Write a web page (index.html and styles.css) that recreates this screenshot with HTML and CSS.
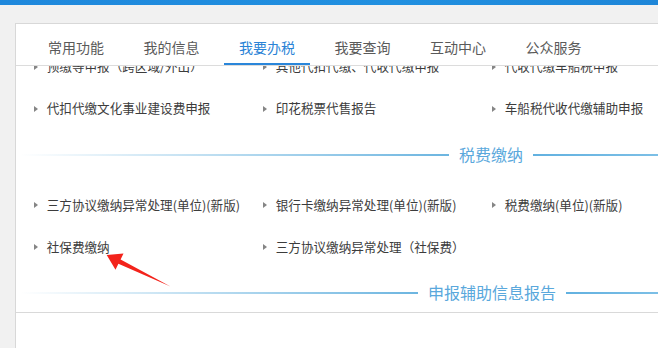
FILE: index.html
```html
<!DOCTYPE html>
<html lang="zh-CN">
<head>
<meta charset="utf-8">
<title>我要办税</title>
<link rel="stylesheet" href="styles.css">
</head>
<body>
<div class="topbar"></div>
<div class="card">
  <nav class="tabs">
    <a class="tab">常用功能</a>
    <a class="tab">我的信息</a>
    <a class="tab active">我要办税</a>
    <a class="tab">我要查询</a>
    <a class="tab">互动中心</a>
    <a class="tab">公众服务</a>
  </nav>
  <div class="pane">
    <div class="pane-inner">
      <ul class="grid">
        <li class="item">预缴等申报（跨区域/外出）</li>
        <li class="item">其他代扣代缴、代收代缴申报</li>
        <li class="item">代收代缴车船税申报</li>
        <li class="item">代扣代缴文化事业建设费申报</li>
        <li class="item">印花税票代售报告</li>
        <li class="item">车船税代收代缴辅助申报</li>
      </ul>
      <div class="sec"><span class="line l l-pay"></span><span class="sec-title">税费缴纳</span><span class="line r"></span></div>
      <ul class="grid">
        <li class="item">三方协议缴纳异常处理(单位)(新版)</li>
        <li class="item">银行卡缴纳异常处理(单位)(新版)</li>
        <li class="item">税费缴纳(单位)(新版)</li>
        <li class="item">社保费缴纳</li>
        <li class="item">三方协议缴纳异常处理（社保费）</li>
      </ul>
      <div class="sec"><span class="line l l-aux"></span><span class="sec-title">申报辅助信息报告</span><span class="line r"></span></div>
    </div>
  </div>
</div>
<svg class="arrow" width="76" height="44" viewBox="0 0 76 44">
  <polygon points="6.7,7 23.5,5.5 20.6,11.4 70.5,38.5 18.4,15.8 15.5,21.7" fill="#f3231b"/>
</svg>
</body>
</html>
```
FILE: styles.css
```css
html, body {
  margin: 0;
  height: 100%;
}
body {
  background: #f1f1f1;
  overflow: hidden;
  position: relative;
  font-family: "Noto Sans CJK SC", "Noto Sans", sans-serif;
}
.topbar {
  height: 5px;
  background: linear-gradient(to right, #1f88dc, #2190e0 60%, #1e86d8);
}
.card {
  margin: 18px 0 0 15px;
  height: calc(100vh - 24px);
  background: #fff;
  border: 1px solid #d8d8d8;
  border-right: none;
  border-bottom: none;
}
.tabs {
  display: flex;
  gap: 9.5px;
  padding-left: 17px;
  height: 41px;
  border-bottom: 1px solid #dcdcdc;
}
.tab {
  box-sizing: border-box;
  height: 41px;
  padding: 13px 15px 0;
  line-height: 20px;
  font-size: 14px;
  color: #5a5a5a;
  white-space: nowrap;
}
.tab.active {
  color: #2a83d6;
  box-shadow: inset 0 -2px 0 #2a86da;
}
.pane {
  height: 246px;
  overflow: hidden;
  border-bottom: 1px solid #d9d9d9;
}
.pane-inner {
  margin-top: -21.5px;
  padding-left: 4px;
}
.grid {
  list-style: none;
  margin: 0;
  padding: 0 0 0 14px;
  display: grid;
  grid-template-columns: 229px 229px 1fr;
}
.item {
  height: 42px;
  display: flex;
  align-items: center;
  font-size: 12.6px;
  color: #3c3c3c;
  white-space: nowrap;
}
.item::before {
  content: "";
  width: 0;
  height: 0;
  border-left: 4px solid #858585;
  border-top: 3px solid transparent;
  border-bottom: 3px solid transparent;
  margin-right: 8.7px;
  transform: translateY(1px);
}
.sec {
  display: flex;
  align-items: center;
  padding: 15px 0 19.5px;
}
.sec-title {
  font-size: 16px;
  line-height: 20px;
  color: #5aa8dc;
  padding: 0 10px;
  white-space: nowrap;
}
.line {
  height: 2px;
  transform: translateY(1px);
}
.line.l {
  flex: none;
  background: linear-gradient(to right, rgba(140, 200, 230, 0), #6cb5e0);
}
.l-pay {
  width: 429px;
}
.l-aux {
  width: 398px;
}
.line.r {
  flex: 1;
  background: linear-gradient(to right, #62b1e0, #7cbfe6);
}
.arrow {
  position: absolute;
  left: 100px;
  top: 248px;
}
```
